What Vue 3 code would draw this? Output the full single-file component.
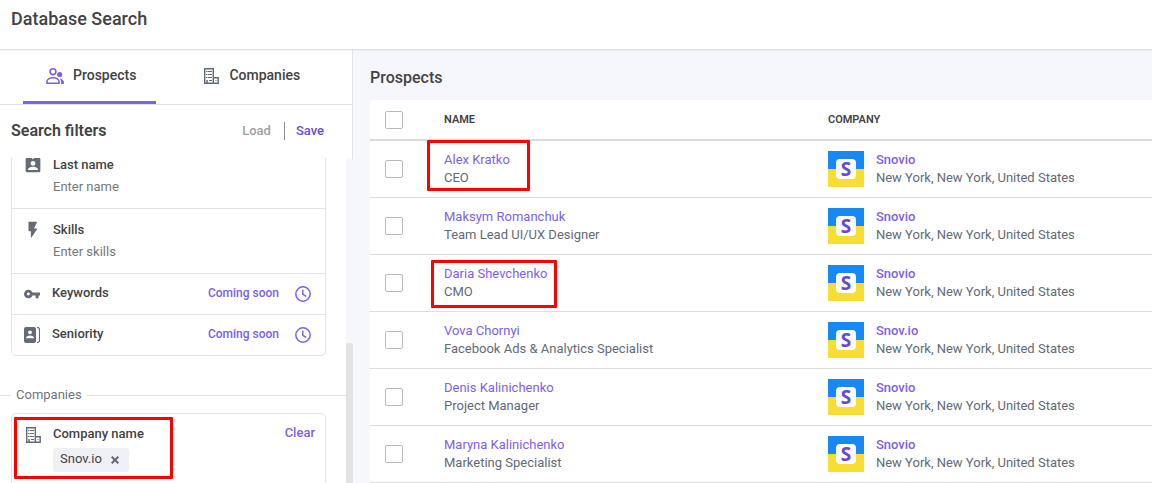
<script setup>
import { ref } from 'vue'

const people = ref([
  { id: 1, name: 'Alex Kratko', role: 'CEO', company: 'Snovio', mark: 'mark-first' },
  { id: 2, name: 'Maksym Romanchuk', role: 'Team Lead UI/UX Designer', company: 'Snovio' },
  { id: 3, name: 'Daria Shevchenko', role: 'CMO', company: 'Snovio', mark: 'mark-third' },
  { id: 4, name: 'Vova Chornyi', role: 'Facebook Ads & Analytics Specialist', company: 'Snov.io' },
  { id: 5, name: 'Denis Kalinichenko', role: 'Project Manager', company: 'Snovio' },
  { id: 6, name: 'Maryna Kalinichenko', role: 'Marketing Specialist', company: 'Snovio' },
])
const place = 'New York, New York, United States'
const lastName = ref('')
const skills = ref('')
</script>

<template>
  <div class="page">
    <header class="topbar"><h1>Database Search</h1></header>
    <div class="body">
      <aside class="side">
        <nav class="tabs">
          <button class="tab active" type="button">
            <svg width="18" height="16" viewBox="0 0 18 16" fill="none">
              <circle cx="7" cy="3.7" r="2.9" stroke="currentColor" stroke-width="1.6" />
              <path d="M.9 15.200v-1c0-2.600 2.600-4.400 6.100-4.400s6.100 1.800 6.100 4.400v1z" stroke="currentColor" stroke-width="1.600" stroke-linejoin="round" />
              <circle cx="13.700" cy="6.500" r="2.600" fill="currentColor" />
              <path d="M13.700 10.500c2.600.5 4.200 2 4.200 4v1.500h-2.800v-1.700c0-1.400-.5-2.700-1.400-3.800z" fill="currentColor" />
            </svg>
            <span>Prospects</span>
          </button>
          <button class="tab" type="button">
            <svg class="grey" width="17" height="16" viewBox="0 0 17 16" fill="none" stroke="currentColor">
              <path d="M1.700.7h8.600v14.600H1.700zM10.300 9.700h4.900v5.600h-4.900" stroke-width="1.400" />
              <path d="M3 3.500h1.500M5 3.500h4M3 6.500h1.500M5 6.500h4M3 9.500h1.500M5 9.500h4M6 12.500h3M12.500 12.500h1" />
              <path d="M4 12v3" stroke-width="1.500" />
            </svg>
            <span>Companies</span>
          </button>
        </nav>
        <div class="filters-head">
          <h2>Search filters</h2>
          <div class="actions">
            <button class="load" type="button">Load</button>
            <button class="save" type="button">Save</button>
          </div>
        </div>

        <div class="scroll">
          <div class="list">
            <section class="card scrolled">
              <div class="field">
                <svg class="icon" width="18" height="18" viewBox="1 1 22 22" fill="currentColor">
                  <path d="M19 3h-4.180C14.400 1.840 13.300 1 12 1s-2.400.84-2.820 2H5c-1.100 0-2 .9-2 2v14c0 1.100.9 2 2 2h14c1.100 0 2-.9 2-2V5c0-1.100-.9-2-2-2zm-7 0c.55 0 1 .45 1 1s-.45 1-1 1-1-.45-1-1 .45-1 1-1zm0 4c1.660 0 3 1.340 3 3s-1.340 3-3 3-3-1.340-3-3 1.340-3 3-3zm6 11H6v-.900c0-2 4-3.100 6-3.100s6 1.100 6 3.100V18z" />
                </svg>
                <div class="stack">
                  <label for="last-name">Last name</label>
                  <input id="last-name" v-model="lastName" type="text" placeholder="Enter name" />
                </div>
              </div>
              <div class="field">
                <svg class="icon" width="18" height="18" viewBox="0 0 24 24" fill="currentColor">
                  <path d="M6 1v12.500h3.200V23L18 10h-4.700L17.500 1z" />
                </svg>
                <div class="stack">
                  <label for="skills">Skills</label>
                  <input id="skills" v-model="skills" type="text" placeholder="Enter skills" />
                </div>
              </div>
              <div class="field soon">
                <svg class="icon" width="16" height="16" viewBox="1 1 22 22" fill="currentColor">
                  <path d="M12.650 10C11.830 7.670 9.610 6 7 6c-3.310 0-6 2.690-6 6s2.690 6 6 6c2.610 0 4.830-1.670 5.650-4H17v4h4v-4h2v-4H12.650zM7 14c-1.100 0-2-.9-2-2s.9-2 2-2 2 .9 2 2-.9 2-2 2z" />
                </svg>
                <span class="label">Keywords</span>
                <span class="note">Coming soon</span>
                <svg class="clock" width="16" height="16" viewBox="0 0 16 16" fill="none" stroke="currentColor">
                  <circle cx="8" cy="8" r="7.200" stroke-width="1.500" />
                  <path d="M7.800 3.800v4.500l3.400 2" stroke-width="1.500" />
                </svg>
              </div>
              <div class="field soon">
                <svg class="icon" width="16" height="16" viewBox="0 0 16 16">
                  <rect width="12" height="16" rx="2" fill="currentColor" />
                  <circle cx="6" cy="5.300" r="1.900" fill="#fff" />
                  <path d="M2 11.200c0-1.700 1.900-2.700 4-2.700s4 1 4 2.700z" fill="#fff" />
                  <path d="M13 .5c1.900 0 2.500.5 2.500 2v11c0 1.500-.6 2-2.500 2" fill="none" stroke="currentColor" stroke-width="1.200" />
                </svg>
                <span class="label">Seniority</span>
                <span class="note">Coming soon</span>
                <svg class="clock" width="16" height="16" viewBox="0 0 16 16" fill="none" stroke="currentColor">
                  <circle cx="8" cy="8" r="7.200" stroke-width="1.500" />
                  <path d="M7.800 3.800v4.500l3.400 2" stroke-width="1.500" />
                </svg>
              </div>
            </section>

            <div class="legend"><span>Companies</span></div>

            <section class="card">
              <div class="field company">
                <div class="mark mark-company"></div>
                <svg class="icon" width="18" height="16" viewBox="-1 0 18 16" fill="none" stroke="currentColor">
                  <path d="M1.700.7h8.600v14.600H1.700zM10.300 9.700h4.900v5.600h-4.900" stroke-width="1.400" />
                  <path d="M3 3.500h1.500M5 3.500h4M3 6.500h1.500M5 6.500h4M3 9.500h1.500M5 9.500h4M6 12.500h3M12.500 12.500h1" />
                  <path d="M4 12v3" stroke-width="1.500" />
                </svg>
                <div class="stack">
                  <span class="label">Company name</span>
                  <span class="chip">
                    Snov.io
                    <button type="button" aria-label="Remove Snov.io">
                      <svg width="8" height="8" viewBox="0 0 8 8" stroke="currentColor" stroke-width="2"><path d="M.7.7l6.600 6.600M7.300.7L.7 7.300" /></svg>
                    </button>
                  </span>
                </div>
                <button class="clear" type="button">Clear</button>
              </div>
            </section>
          </div>
          <div class="track"><div class="thumb"></div></div>
        </div>
      </aside>

      <main class="main">
        <h2>Prospects</h2>
        <table>
          <colgroup><col class="c-check" /><col class="c-name" /><col /></colgroup>
          <thead>
            <tr>
              <th class="pick"><input type="checkbox" aria-label="Select all" /></th>
              <th>NAME</th>
              <th>COMPANY</th>
            </tr>
          </thead>
          <tbody>
            <tr v-for="p in people" :key="p.id">
              <td class="pick"><input type="checkbox" :aria-label="'Select ' + p.name" /></td>
              <td>
                <div class="person">
                  <div v-if="p.mark" class="mark" :class="p.mark"></div>
                  <a href="#">{{ p.name }}</a>
                  <span>{{ p.role }}</span>
                </div>
              </td>
              <td>
                <div class="firm">
                  <div class="logo"><span>S</span></div>
                  <div class="person">
                    <a class="strong" href="#">{{ p.company }}</a>
                    <span>{{ place }}</span>
                  </div>
                </div>
              </td>
            </tr>
          </tbody>
        </table>
      </main>
    </div>
  </div>
</template>

<style>
body {
  overflow: hidden;
}
</style>

<style scoped>
* {
  box-sizing: border-box;
}
.page {
  height: 100vh;
  display: flex;
  flex-direction: column;
  overflow: hidden;
  background: #fff;
  color: #434343;
  font: 13px/18px Roboto, "Liberation Sans", sans-serif;
}
h1,
h2 {
  margin: 0;
  font-weight: 500;
}
button {
  border: 0;
  padding: 0;
  background: none;
  font: inherit;
  color: inherit;
}
a {
  text-decoration: none;
  color: #7f5fe8;
}
.topbar {
  flex: none;
  height: 50px;
  padding: 7px 11px;
  border-bottom: 1px solid #e0e0e0;
  box-shadow: 0 1px 1px rgba(0, 0, 0, 0.03);
  position: relative;
}
.topbar h1 {
  font-size: 18px;
  line-height: 24px;
}
.body {
  flex: 1;
  min-height: 0;
  display: flex;
}
.side {
  flex: none;
  width: 353px;
  display: flex;
  flex-direction: column;
  border-right: 1px solid #e3e3e6;
}
.tabs {
  flex: none;
  display: flex;
  gap: 24px;
  height: 55px;
  padding-left: 23px;
  border-bottom: 1px solid #e3e3e3;
}
.tab {
  display: flex;
  align-items: center;
  gap: 9px;
  padding: 0 20px 0 23px;
  border-bottom: 3px solid transparent;
  font-size: 14px;
  font-weight: 500;
}
.tab span {
  padding-bottom: 2px;
}
.tab.active {
  border-bottom-color: #7c62e6;
}
.tab.active svg {
  color: #7c62e6;
}
.grey {
  color: #636b76;
}
.filters-head {
  flex: none;
  display: flex;
  justify-content: space-between;
  align-items: center;
  height: 53px;
  padding: 0 28px 2px 11px;
}
.filters-head h2 {
  font-size: 16px;
  font-weight: 600;
}
.actions {
  display: flex;
  font-weight: 500;
}
.load {
  padding-right: 13px;
  border-right: 1px solid #8f8f8f;
  color: #a0a0a0;
}
.save {
  padding-left: 11px;
  color: #6a4de0;
}
.scroll {
  flex: 1;
  min-height: 0;
  display: flex;
  overflow: hidden;
  margin-right: -1px;
}
.list {
  flex: 1;
}
.card {
  margin: 0 20px 0 11px;
  border: 1px solid #e3e3e3;
  border-radius: 5px;
}
.card.scrolled {
  margin-top: -15px;
}
.field {
  display: flex;
  padding: 12px 10px 12px 12px;
}
.field + .field {
  border-top: 1px solid #e3e3e3;
}
.icon {
  flex: none;
  color: #636b76;
  margin-right: 11px;
}
.stack {
  flex: 1;
  min-width: 0;
  display: flex;
  flex-direction: column;
  align-items: flex-start;
}
label,
.label {
  font-weight: 500;
}
.stack input {
  width: 100%;
  height: 18px;
  margin-top: 4px;
  padding: 0;
  border: 0;
  outline: none;
  font: inherit;
}
.stack input::placeholder {
  color: #777;
  opacity: 1;
}
.soon {
  align-items: center;
  height: 41px;
  padding: 0 14px 0 12px;
}
.soon .icon {
  margin-right: 12px;
}
.soon .label {
  flex: 1;
  padding-bottom: 2px;
}
.note {
  margin-right: 16px;
  padding-bottom: 2px;
  font-size: 12px;
  font-weight: 500;
  color: #7c62e6;
}
.clock {
  color: #7c62e6;
}
.legend {
  display: flex;
  align-items: center;
  gap: 5px;
  margin: 30px 0 9px;
  color: #6f7479;
}
.legend::before,
.legend::after {
  content: "";
  height: 1px;
  background: #e3e3e3;
  width: 11px;
}
.legend::after {
  flex: 1;
}
.company {
  position: relative;
  padding-top: 10px;
  padding-bottom: 24px;
}
.company .icon {
  margin-top: 3px;
}
.company .stack {
  padding-top: 1px;
}
.chip {
  display: flex;
  align-items: center;
  gap: 9px;
  height: 24px;
  margin-top: 5px;
  padding: 0 10px 2px 7px;
  border-radius: 3px;
  background: #eff0f5;
}
.chip button {
  display: flex;
  padding-top: 2px;
  color: #636b76;
}
.clear {
  align-self: flex-start;
  color: #7f5fe8;
  font-weight: 500;
}
.track {
  flex: none;
  width: 7px;
  border-radius: 3px 3px 0 0;
  background: #f6f7fd;
  padding-top: 185px;
}
.thumb {
  height: 100%;
  border-radius: 3px 3px 0 0;
  background: #e3e3e3;
}
.main {
  flex: 1;
  min-width: 0;
  padding: 16px 0 0 17px;
  background: #f6f7fd;
  overflow: hidden;
}
.main h2 {
  font-size: 16px;
  line-height: 24px;
  margin-bottom: 10px;
}
table {
  width: 100%;
  table-layout: fixed;
  border-collapse: separate;
  border-spacing: 0;
  background: #fff;
}
.c-check {
  width: 74px;
}
.c-name {
  width: 49.1%;
}
th {
  height: 41px;
  padding: 0;
  text-align: left;
  font-size: 11px;
  font-weight: 600;
  border-bottom: 2px solid #dcdcdc;
}
td {
  padding: 10px 0;
  border-bottom: 1px solid #dcdcdc;
}
.pick {
  padding-left: 15px;
}
.pick input {
  appearance: none;
  display: block;
  width: 18px;
  height: 18px;
  margin: 0;
  border: 1px solid #b9bac0;
  border-radius: 2px;
  background: #fff;
}
.person {
  position: relative;
  display: flex;
  flex-direction: column;
  align-items: flex-start;
  white-space: nowrap;
  color: #636b76;
}
.strong {
  font-weight: 500;
}
.firm {
  display: flex;
  gap: 12px;
}
.logo {
  flex: none;
  display: flex;
  align-items: center;
  justify-content: center;
  width: 36px;
  height: 36px;
  background: linear-gradient(#1789f5 50%, #fadd33 50%);
}
.logo span {
  width: 20px;
  height: 20px;
  border-radius: 4px;
  background: #fff;
  color: #6549d2;
  text-align: center;
  font: 700 19px/20px "Open Sans", "Noto Sans", sans-serif;
}
/* Highlight frames lie over the content they point at */
.mark {
  position: absolute;
  border: 3px solid #f00;
  border-radius: 1px;
  pointer-events: none;
}
.mark-first {
  left: -17px;
  top: -11px;
  width: 103px;
  height: 51px;
}
.mark-third {
  left: -13px;
  top: -5px;
  width: 126px;
  height: 48px;
}
.mark-company {
  left: 2px;
  top: 3px;
  width: 159px;
  height: 62px;
}
</style>
